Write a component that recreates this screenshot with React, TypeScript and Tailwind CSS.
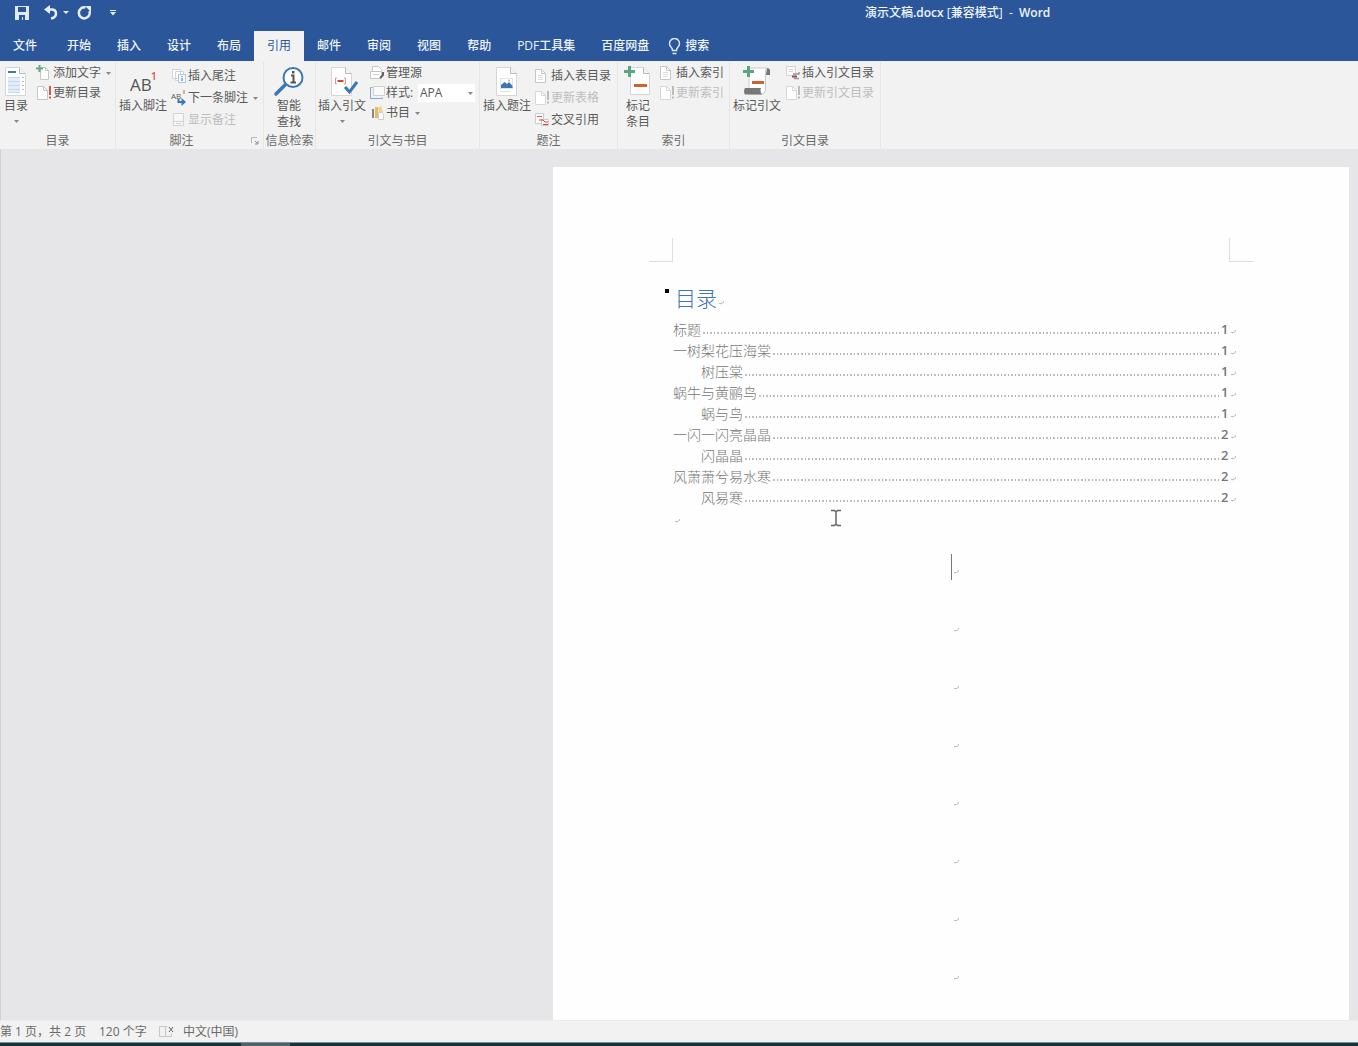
import type { ReactNode } from 'react';

interface TocEntry {
  title: string;
  page: number;
  level: 1 | 2;
}

const tabs = ['开始', '插入', '设计', '布局', '引用', '邮件', '审阅', '视图', '帮助', 'PDF工具集', '百度网盘'];

const toc: TocEntry[] = [
  { title: '标题', page: 1, level: 1 },
  { title: '一树梨花压海棠', page: 1, level: 1 },
  { title: '树压棠', page: 1, level: 2 },
  { title: '蜗牛与黄鹂鸟', page: 1, level: 1 },
  { title: '蜗与鸟', page: 1, level: 2 },
  { title: '一闪一闪亮晶晶', page: 2, level: 1 },
  { title: '闪晶晶', page: 2, level: 2 },
  { title: '风萧萧兮易水寒', page: 2, level: 1 },
  { title: '风易寒', page: 2, level: 2 },
];

/* ---------- large icons ---------- */

function TocIcon() {
  return (
    <svg width="26" height="32" viewBox="0 0 26 32">
      <path d="M2.500 1.500h14l6 6v22h-20z" fill="#fff" stroke="#d3d6da" />
      <path d="M16.500 1.500v6h6" fill="#f4f4f4" stroke="#b9bcc0" />
      <path d="M5 6h8" stroke="#3f78b5" strokeWidth="2" />
      <rect x="5" y="11" width="12" height="16" fill="#e3edf8" />
      <path d="M5 11.500h12M5 15.500h12M5 19.500h12M5 23.500h12M5 26.500h12" stroke="#c5d9ef" />
      <path d="M19 11.500h2M19 15.500h2M19 19.500h2M19 23.500h2" stroke="#a9c0da" />
    </svg>
  );
}

function FootnoteIcon() {
  return (
    <svg width="32" height="32" viewBox="0 0 32 32">
      <text x="3" y="25" fontSize="17" fill="#555" fontFamily="Open Sans, sans-serif">AB</text>
      <text x="24" y="14" fontSize="10" fontWeight="600" fill="#e0563b" fontFamily="Open Sans, sans-serif">1</text>
    </svg>
  );
}

function SmartLookupIcon() {
  return (
    <svg width="32" height="32" viewBox="0 0 32 32">
      <path d="M3 28l9-9" stroke="#3a76b8" strokeWidth="3.500" strokeLinecap="round" />
      <circle cx="20" cy="11.500" r="9.500" fill="#fff" stroke="#3a76b8" strokeWidth="2" />
      <path d="M18 9.500h2.500v7M17.500 16.500h5.500" stroke="#555" strokeWidth="2" fill="none" />
      <rect x="19" y="5" width="2.500" height="2.500" fill="#555" />
    </svg>
  );
}

function CitationIcon() {
  return (
    <svg width="32" height="32" viewBox="0 0 32 32">
      <path d="M5.500 1.500h14l6 6v22h-20z" fill="#fff" stroke="#d6d6d6" />
      <path d="M19.500 1.500v6h6" fill="#f4f4f4" stroke="#bbb" />
      <path d="M11 12H9.500v6H11M18 12h1.500v6H18" stroke="#e39484" fill="none" />
      <path d="M11.500 15h6" stroke="#d24a2f" strokeWidth="2" />
      <path d="M19 21l4.500 5L31 16" stroke="#3a76b8" strokeWidth="3" fill="none" />
    </svg>
  );
}

function CaptionIcon() {
  return (
    <svg width="32" height="32" viewBox="0 0 32 32">
      <path d="M5.500 1.500h14l6 6v22h-20z" fill="#fff" stroke="#d6d6d6" />
      <path d="M19.500 1.500v6h6" fill="#f4f4f4" stroke="#bbb" />
      <rect x="9.500" y="12.500" width="12" height="10" fill="#fff" stroke="#dbe5f0" />
      <path d="M10 22v-3l3.500-3 2.500 2 2-2 3.500 4v2z" fill="#3a76b8" />
      <circle cx="18" cy="14.500" r="1" fill="#e0b060" />
      <path d="M9 25.500h10" stroke="#ddd" />
    </svg>
  );
}

function MarkEntryIcon() {
  return (
    <svg width="32" height="32" viewBox="0 0 32 32">
      <path d="M8.500 1.500h13l6 6v21h-19z" fill="#fff" stroke="#d6d6d6" />
      <path d="M21.500 1.500v6h6" fill="#f4f4f4" stroke="#bbb" />
      <path d="M2 5.500h11M7.500 0v11" stroke="#5aa583" strokeWidth="3" />
      <path d="M12 19.500h13" stroke="#d2622c" strokeWidth="3" />
    </svg>
  );
}

function MarkCitationIcon() {
  return (
    <svg width="32" height="32" viewBox="0 0 32 32">
      <path d="M26 2q3 0 3 3v4h-4z" fill="#777" />
      <path d="M8 2h18q-1.500 1-1.500 4v18q0 4-4 4H8z" fill="#fff" stroke="#ccc" />
      <path d="M4 22h16q-1.500 3 1 6.500H4q-2-3 0-6.500z" fill="#777" />
      <path d="M2 5.500h11M7.500 0v11" stroke="#5aa583" strokeWidth="3" />
      <path d="M11 16.500h12" stroke="#d2622c" strokeWidth="3" />
    </svg>
  );
}

/* ---------- small icons ---------- */

function SmallPage({ color = '#c6c6c6', children }: { color?: string; children?: ReactNode }) {
  return (
    <svg width="16" height="16" viewBox="0 0 16 16" className="shrink-0">
      <path d="M1.500 1.500h6l4 4v9h-10z" fill="#fff" stroke={color} />
      <path d="M7.500 1.500v4h4" fill="none" stroke={color} />
      {children}
    </svg>
  );
}

const addTextIcon = (
  <svg width="16" height="16" viewBox="0 0 16 16" className="shrink-0">
    <path d="M4.500 2.500h5l3 3v9h-8z" fill="#fff" stroke="#c6c6c6" />
    <path d="M9.500 2.500v3h3" fill="none" stroke="#c6c6c6" />
    <path d="M0 3.500h7M3.500 0v7" stroke="#6aa98a" strokeWidth="2" />
  </svg>
);

const updateIcon = (
  <SmallPage>
    <path d="M14 1v9M14 11.500v2" stroke="#d9583f" strokeWidth="2" />
  </SmallPage>
);

const updateDisabledIcon = (
  <SmallPage color="#d8d8d8">
    <path d="M14 1v9M14 11.500v2" stroke="#bcbcbc" strokeWidth="2" />
  </SmallPage>
);

const pageListIcon = (
  <SmallPage>
    <path d="M4 7.500h5M4 9.500h5M4 11.500h5" stroke="#dcdcdc" />
  </SmallPage>
);

const endnoteIcon = (
  <svg width="16" height="16" viewBox="0 0 16 16" className="shrink-0">
    <path d="M1.500 1.500h8v9h-8zM4.500 3.500h8v9h-8z" fill="#fff" stroke="#cdd4dc" />
    <rect x="7.500" y="6.500" width="7" height="8" fill="#f4f8fd" stroke="#b3c9e2" />
    <path d="M11 8v1M11 10v3" stroke="#3a76b8" />
  </svg>
);

const nextFootnoteIcon = (
  <svg width="16" height="16" viewBox="0 0 16 16" className="shrink-0">
    <text x="0" y="9" fontSize="8" fill="#555" fontFamily="Open Sans, sans-serif">AB</text>
    <path d="M13 0v4" stroke="#e0563b" />
    <path d="M7.500 9v3h4" fill="none" stroke="#3a76b8" strokeWidth="2" />
    <path d="M10.500 8l4.500 4-4.500 4z" fill="#3a76b8" />
  </svg>
);

const showNotesIcon = (
  <svg width="16" height="16" viewBox="0 0 16 16" className="shrink-0">
    <path d="M2.500 1.500h10v12h-10zM2.500 9.500h10" fill="#f8f8f8" stroke="#d4d4d4" />
    <path d="M5 11.500h5" stroke="#d4d4d4" />
  </svg>
);

const manageSourcesIcon = (
  <svg width="16" height="16" viewBox="0 0 16 16" className="shrink-0">
    <path d="M3.500 6V1.500h6l3 3V6M1.500 6.500h11v7h-11z" fill="#fff" stroke="#c6c6c6" />
    <path d="M4 9.500h6" stroke="#ccc" />
    <path d="M14 7v3l-3 3" fill="none" stroke="#666" strokeWidth="2" />
  </svg>
);

const styleIcon = (
  <svg width="16" height="16" viewBox="0 0 16 16" className="shrink-0">
    <path d="M4.500 1.500h11v9h-11z" fill="#fafafa" stroke="#cfcfcf" />
    <path d="M3.500 2.500h-2v11h12v-1" fill="none" stroke="#8fa6cc" />
  </svg>
);

const bibliographyIcon = (
  <svg width="16" height="16" viewBox="0 0 16 16" className="shrink-0">
    <path d="M3 4h2v9H3z" fill="#888" />
    <path d="M6 2h3v11H6z" fill="#e6bc62" />
    <path d="M9 3l3-2 2 6-3 4z" fill="#efd192" />
    <path d="M9.500 7.500h3l2 2v5h-5z" fill="#fff" stroke="#ccc" />
  </svg>
);

const crossRefIcon = (
  <svg width="16" height="16" viewBox="0 0 16 16" className="shrink-0">
    <path d="M1.500 1.500h8v10h-8z" fill="#fff" stroke="#ccc" />
    <path d="M3 4.500h5" stroke="#d9583f" />
    <path d="M7.500 7.500h7v6h-7z" fill="#fff" stroke="#ccc" />
    <path d="M5 8h4l2 2h3M9 12.500h5" stroke="#d2452f" fill="none" />
  </svg>
);

const citationTableIcon = (
  <svg width="16" height="16" viewBox="0 0 16 16" className="shrink-0">
    <path d="M1.500 1.500h9v9h-9z" fill="#fafafa" stroke="#d4d4d4" />
    <path d="M4 4.500h4M4 6.500h4" stroke="#d4d4d4" />
    <path d="M8 9h6v-2M9 13.500h5" stroke="#999" fill="none" strokeWidth="1.500" />
    <path d="M7 11.500h5" stroke="#b0405a" strokeWidth="2" />
  </svg>
);

/* ---------- ribbon pieces ---------- */

function Caret({ className = '' }: { className?: string }) {
  return (
    <svg width="5" height="3" viewBox="0 0 5 3" className={`shrink-0 ${className}`}>
      <path d="M0 0h5L2.500 3z" fill="#888" />
    </svg>
  );
}

function Group({ label, width, launcher, children }: { label: string; width: string; launcher?: boolean; children: ReactNode }) {
  return (
    <section aria-label={label} className={`flex h-[87px] shrink-0 flex-col border-r border-[#e6e6e6] ${width}`}>
      <div className="flex flex-1">{children}</div>
      <div className="flex h-4 items-center">
        <span className="flex-1 text-center whitespace-nowrap text-[#6a6a6a]">{label}</span>
        {launcher && (
          <button aria-label={`${label}设置`} className="flex w-4 justify-center">
            <svg width="8" height="8" viewBox="0 0 8 8" fill="none">
              <path d="M.5 6V.5H6" stroke="#b5b5b5" />
              <path d="M4 4l2 2M7 4v3H4" stroke="#888" />
            </svg>
          </button>
        )}
      </div>
    </section>
  );
}

function BigButton({ icon, lines, width, caret }: { icon: ReactNode; lines: string[]; width: string; caret?: boolean }) {
  return (
    <button className={`flex shrink-0 flex-col items-center pt-1 leading-4 whitespace-nowrap ${width}`}>
      {icon}
      {lines.map(line => (
        <span key={line}>{line}</span>
      ))}
      {caret && <Caret className="mt-1.5" />}
    </button>
  );
}

function SmallButton({ icon, label, caret, disabled }: { icon: ReactNode; label: string; caret?: boolean; disabled?: boolean }) {
  return (
    <button disabled={disabled} className="flex flex-1 items-center gap-px whitespace-nowrap disabled:text-[#bdbdbd]">
      {icon}
      {label}
      {caret && <Caret className="ml-1" />}
    </button>
  );
}

function Ribbon() {
  return (
    <div className="flex overflow-hidden bg-[#f2f2f2] pt-px text-[#595959]">
      <Group label="目录" width="w-[116px]">
        <BigButton icon={<TocIcon />} lines={['目录']} width="w-8" caret />
        <div className="mt-px ml-1 flex h-10 flex-col">
          <SmallButton icon={addTextIcon} label="添加文字" caret />
          <SmallButton icon={updateIcon} label="更新目录" />
        </div>
      </Group>
      <Group label="脚注" width="w-[148px]" launcher>
        <BigButton icon={<FootnoteIcon />} lines={['插入脚注']} width="w-[54px]" />
        <div className="mt-[3px] ml-px flex h-[66px] flex-col">
          <SmallButton icon={endnoteIcon} label="插入尾注" />
          <SmallButton icon={nextFootnoteIcon} label="下一条脚注" caret />
          <SmallButton icon={showNotesIcon} label="显示备注" disabled />
        </div>
      </Group>
      <Group label="信息检索" width="w-[52px]">
        <BigButton icon={<SmartLookupIcon />} lines={['智能', '查找']} width="w-[50px]" />
      </Group>
      <Group label="引文与书目" width="w-[164px]">
        <BigButton icon={<CitationIcon />} lines={['插入引文']} width="w-[52px]" caret />
        <div className="mt-px ml-px flex h-[60px] flex-col">
          <SmallButton icon={manageSourcesIcon} label="管理源" />
          <div className="flex h-5 items-center">
            {styleIcon}
            <label htmlFor="citation-style" className="ml-px w-8 whitespace-nowrap">样式:</label>
            <div className="relative">
              <select id="citation-style" className="h-[18px] w-[57px] appearance-none bg-white pl-0.5 leading-4">
                <option>APA</option>
              </select>
              <Caret className="pointer-events-none absolute top-2 right-0.5" />
            </div>
          </div>
          <SmallButton icon={bibliographyIcon} label="书目" caret />
        </div>
      </Group>
      <Group label="题注" width="w-[138px]">
        <BigButton icon={<CaptionIcon />} lines={['插入题注']} width="w-[54px]" />
        <div className="mt-[3px] flex h-[66px] flex-col">
          <SmallButton icon={pageListIcon} label="插入表目录" />
          <SmallButton icon={updateDisabledIcon} label="更新表格" disabled />
          <SmallButton icon={crossRefIcon} label="交叉引用" />
        </div>
      </Group>
      <Group label="索引" width="w-[112px]">
        <BigButton icon={<MarkEntryIcon />} lines={['标记', '条目']} width="w-10" />
        <div className="mt-px ml-px flex h-10 flex-col">
          <SmallButton icon={pageListIcon} label="插入索引" />
          <SmallButton icon={updateDisabledIcon} label="更新索引" disabled />
        </div>
      </Group>
      <Group label="引文目录" width="w-[151px]">
        <BigButton icon={<MarkCitationIcon />} lines={['标记引文']} width="w-[54px]" />
        <div className="mt-px ml-px flex h-10 flex-col">
          <SmallButton icon={citationTableIcon} label="插入引文目录" />
          <SmallButton icon={updateDisabledIcon} label="更新引文目录" disabled />
        </div>
      </Group>
    </div>
  );
}

function TitleBar() {
  return (
    <header className="flex h-[31px] shrink-0 items-center pb-1.5 text-[#eef3fb]">
      <div className="flex w-[865px] shrink-0 items-center pl-[15px]">
        <button aria-label="保存">
          <svg width="14" height="14" viewBox="0 0 14 14">
            <path d="M0 0h14v14H0z" fill="#dfe9f8" />
            <path d="M3 1h8v5H3zM4 9h6v5H8v-3H7v3H4z" fill="#2b579a" />
          </svg>
        </button>
        <button aria-label="撤消" className="ml-3.5">
          <svg width="16" height="16" viewBox="0 0 16 16">
            <path d="M7 0v9L1 4.500z" fill="#e6eefa" />
            <path d="M5 4.500h3.500q4.500 0 4.500 4t-5 5" fill="none" stroke="#e6eefa" strokeWidth="2.500" />
          </svg>
        </button>
        <button aria-label="撤消选项" className="ml-1">
          <svg width="6" height="3" viewBox="0 0 6 3"><path d="M0 0h6L3 3z" fill="#e6eefa" /></svg>
        </button>
        <button aria-label="重复" className="ml-2">
          <svg width="16" height="16" viewBox="0 0 16 16">
            <path d="M8.500 2.500A5.500 5.500 0 1 0 12.500 6" fill="none" stroke="#e6eefa" strokeWidth="2.500" />
            <path d="M8 1h6v6z" fill="#e6eefa" />
          </svg>
        </button>
        <button aria-label="自定义快速访问工具栏" className="ml-4">
          <svg width="8" height="6" viewBox="0 0 8 6"><path d="M1 .5h6" stroke="#e6eefa" /><path d="M1 2h6L4 5.500z" fill="#e6eefa" /></svg>
        </button>
      </div>
      <h1 className="font-medium whitespace-pre">
        演示文稿<span className="font-semibold">.docx</span> [兼容模式]{'  -  '}
        <span className="font-semibold">Word</span>
      </h1>
    </header>
  );
}

function TabBar() {
  return (
    <nav className="flex h-[30px] shrink-0 font-medium whitespace-nowrap text-[#eef3fb]">
      <button className="w-[54px] pr-1">文件</button>
      {tabs.map(tab => (
        <button
          key={tab}
          className={tab === '引用' ? 'bg-[#f2f2f2] px-[13px] font-normal text-[#2b579a]' : 'px-[13px]'}
        >
          {tab}
        </button>
      ))}
      <button className="flex items-center gap-1 px-1.5">
        <svg width="13" height="17" viewBox="0 0 12 17" fill="none" stroke="#dce7f7" strokeWidth="1.500">
          <path d="M4 12.500Q4 10.500 2.500 9A5 5 0 1 1 9.500 9Q8 10.500 8 12.500zM4 15.500h4" />
        </svg>
        搜索
      </button>
    </nav>
  );
}

// paragraph mark shown at the end of every line
function ParaMark({ className = '' }: { className?: string }) {
  return (
    <svg width="5" height="4" viewBox="0 0 5 4" className={`shrink-0 ${className}`}>
      <path d="M4.500 0v1.500L1 3M0 2.500h3" fill="none" stroke="#c0c0c0" />
    </svg>
  );
}

function DocumentPage() {
  return (
    <article className="relative ml-auto w-[796px] bg-[#fefefe] pt-[71px]">
      <div className="mx-[96px] flex justify-between">
        <span className="size-6 border-r border-b border-[#dedede]" />
        <span className="size-6 border-b border-l border-[#dedede]" />
      </div>
      <div className="mr-[113px] ml-[120px]">
        <div className="mt-5 flex h-8 items-center">
          <span className="mb-3.5 -ml-2 size-1 bg-black" />
          <h2 className="ml-1.5 text-[21px] leading-8 font-light text-[#3f74b8]">目录</h2>
          <ParaMark className="mt-2.5 ml-0.5" />
        </div>
        <ol className="mt-[5px] text-sm text-[#777]">
          {toc.map(entry => (
            <li key={entry.title}>
              <a href="#" className={`flex h-[21px] items-center ${entry.level === 2 ? 'pl-7' : ''}`}>
                <span className="font-light">{entry.title}</span>
                <span className="mt-1.5 ml-0.5 h-[2px] flex-1 bg-[repeating-linear-gradient(90deg,#c0c0c0_0_2px,transparent_2px_4px,#b0b0b0_4px_5px,transparent_5px_7px)]" />
                <span className="ml-0.5 w-2 text-[13px] font-semibold text-[#777]">{entry.page}</span>
                <ParaMark className="mt-1 ml-0.5" />
              </a>
            </li>
          ))}
        </ol>
        <ParaMark className="mt-[11px] ml-0.5" />
        <div className="mt-[29px] flex h-[29px] items-center justify-center">
          <span className="h-[26px] w-px bg-[#777]" />
          <ParaMark className="mt-2.5 ml-0.5" />
        </div>
        {Array.from({ length: 7 }, (_, i) => (
          <div key={i} className="flex h-[58px] items-end justify-center pl-1">
            <ParaMark className="mb-[7px]" />
          </div>
        ))}
      </div>
      {/* mouse pointer */}
      <svg width="12" height="18" viewBox="0 0 12 18" className="absolute top-[342px] left-[277px]">
        <path d="M1 1.500h3.500L6 3l1.500-1.500H11M6 3v12M1 16.500h3.500L6 15l1.500 1.500H11" fill="none" stroke="#666" strokeWidth="1.500" />
      </svg>
    </article>
  );
}

function StatusBar() {
  return (
    <footer className="flex h-[22px] shrink-0 items-center border-t border-[#ececec] bg-[#f2f2f2] whitespace-nowrap text-[#6a6a6a]">
      <button className="w-[99px] text-left">第 1 页，共 2 页</button>
      <button className="w-[59px] text-left">120 个字</button>
      <button aria-label="校对" className="w-[25px]">
        <svg width="17" height="14" viewBox="0 0 17 14" fill="none">
          <path d="M1.500 1.500h6v10h-6zM7.500 1.500h2M7.500 11.500h6v-3" stroke="#c6c6c6" />
          <path d="M11 2l4 5M15 2l-4 5" stroke="#666" />
        </svg>
      </button>
      <button>中文(中国)</button>
    </footer>
  );
}

export default function App() {
  return (
    <div className="flex h-screen flex-col overflow-hidden bg-[#e6e6e8] font-['Open_Sans','Noto_Sans_CJK_SC',sans-serif] text-xs">
      <div className="shrink-0 bg-[#2b579a]">
        <TitleBar />
        <TabBar />
      </div>
      <Ribbon />
      <main className="flex min-h-0 flex-1 overflow-hidden border-l border-[#cfcfd2] pt-[18px] pr-[9px]">
        <DocumentPage />
      </main>
      <StatusBar />
      <div className="flex h-1 shrink-0 border-t border-[#7f8c92] bg-[#17333b] pl-[241px]">
        <span className="w-[49px] bg-[#4d636b]" />
      </div>
    </div>
  );
}
